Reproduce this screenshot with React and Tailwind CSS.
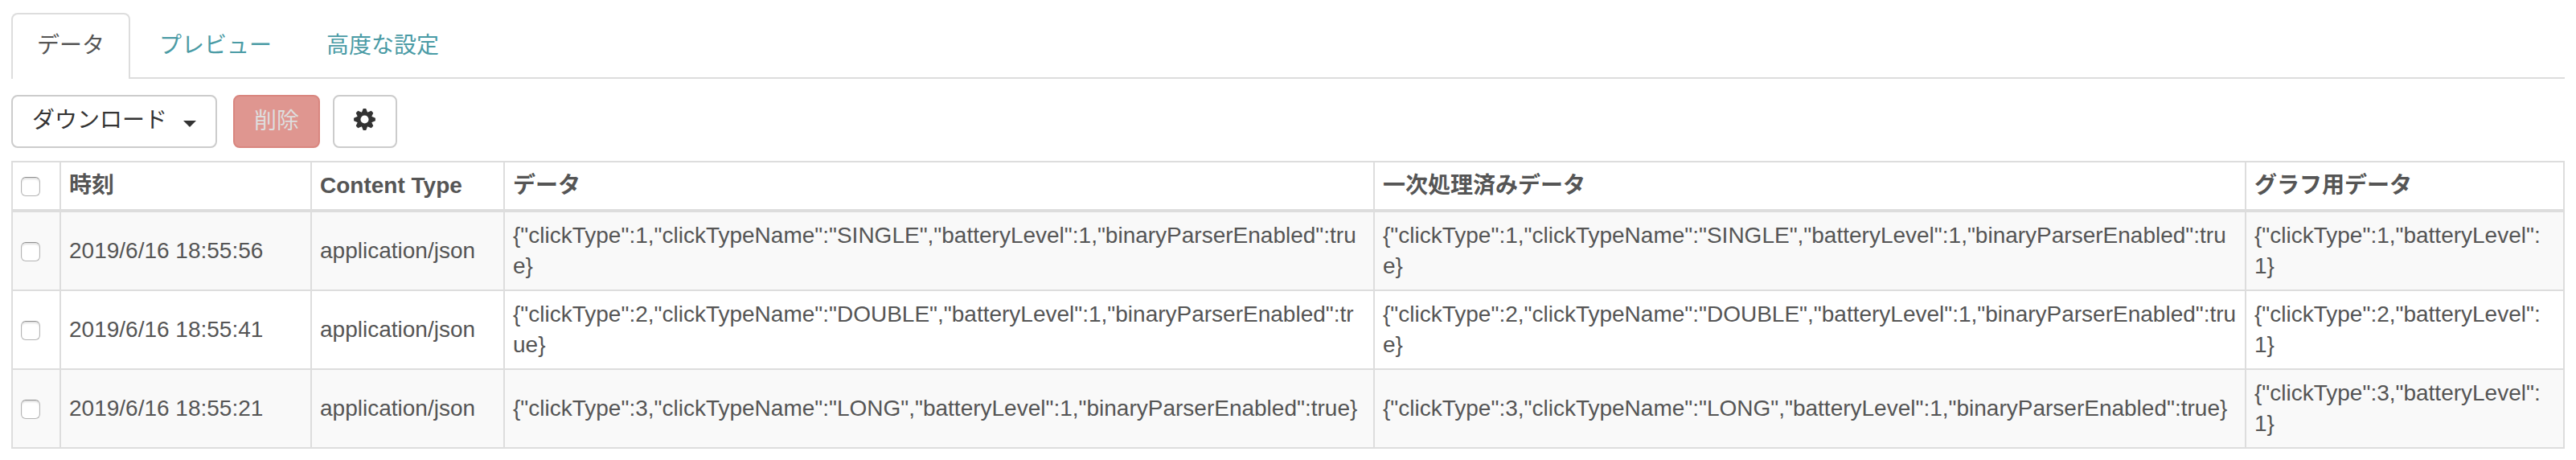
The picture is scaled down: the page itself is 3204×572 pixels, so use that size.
const rows = [
  { time: "2019/6/16 18:55:56", click: 1, name: "SINGLE" },
  { time: "2019/6/16 18:55:41", click: 2, name: "DOUBLE" },
  { time: "2019/6/16 18:55:21", click: 3, name: "LONG" },
];

const payload = (r) =>
  `{"clickType":${r.click},"clickTypeName":"${r.name}","batteryLevel":1,"binaryParserEnabled":true}`;

const graph = (r) => `{"clickType":${r.click},"batteryLevel":1}`;

function Check() {
  return (
    <span className="mt-px block h-6 w-6 rounded-[6px] border border-[#b4b4b4] border-t-[#8f8f8f] bg-white shadow-[inset_0_2px_2px_rgba(0,0,0,0.12)]" />
  );
}

function Gear() {
  return (
    <svg viewBox="-600 -600 1200 1200" className="mr-px mb-[6px] block h-[27px] w-[27px]" fill="#333" stroke="#333" strokeLinejoin="round">
      <circle r="325" fill="none" strokeWidth="200" />
      {[0, 45, 90, 135, 180, 225, 270, 315].map((a) => (
        <path key={a} d="M-130-370L-60-560H60L130-370z" strokeWidth="70" transform={`rotate(${a})`} />
      ))}
    </svg>
  );
}

const th = "border-2 border-b-4 border-[#ddd] px-[10px] py-[9px] text-left align-middle font-bold";
const td = "border-2 border-[#ddd] px-[10px] py-[10px] align-middle break-all";

export default function App() {
  return (
    <div
      lang="ja"
      className="h-[572px] w-[3204px] overflow-hidden bg-white px-[14px] pt-4 font-['Liberation_Sans','Noto_Sans_CJK_JP',sans-serif] text-[28px] leading-10 text-[#555]"
    >
      <nav className="flex h-[82px] border-b-2 border-[#ddd]">
        <span className="h-[82px] w-[148px] rounded-t-lg border-2 border-b-0 border-[#ddd] bg-white pt-[19px] text-center">データ</span>
        <span className="ml-1 pt-[21px] pl-8 whitespace-nowrap text-[#4a9ba5]">プレビュー</span>
        <span className="ml-[68px] pt-[21px] whitespace-nowrap text-[#4a9ba5]">高度な設定</span>
      </nav>
      <div className="mt-5 flex h-[66px] gap-5">
        <button className="flex w-[256px] items-center rounded-lg border-2 border-[#ccc] pb-[2px] pl-6 text-[#333]">
          <span>ダウンロード</span>
          <span className="mt-2 ml-5 h-0 w-0 border-x-8 border-t-8 border-x-transparent border-t-[#333]" />
        </button>
        <button className="w-[108px] rounded-lg border-2 border-[#d9867f] bg-[#df9690] text-[#dedede]">削除</button>
        <button className="-ml-1 flex w-[80px] items-center justify-center rounded-lg border-2 border-[#ccc]">
          <Gear />
        </button>
      </div>
      <table className="mt-[16px] w-[3176px] table-fixed border-collapse">
        <colgroup>
          <col className="w-[60px]" />
          <col className="w-[312px]" />
          <col className="w-[240px]" />
          <col className="w-[1082px]" />
          <col className="w-[1084px]" />
          <col className="w-[396px]" />
        </colgroup>
        <thead>
          <tr>
            <th className={th}><Check /></th>
            <th className={th}>時刻</th>
            <th className={th}>Content Type</th>
            <th className={th}>データ</th>
            <th className={th}>一次処理済みデータ</th>
            <th className={th}>グラフ用データ</th>
          </tr>
        </thead>
        <tbody className="leading-[38px]">
          {rows.map((r) => (
            <tr key={r.time} className="h-[98px] odd:bg-[#f9f9f9]">
              <td className={td}><Check /></td>
              <td className={td}>{r.time}</td>
              <td className={td}>application/json</td>
              <td className={td}>{payload(r)}</td>
              <td className={td}>{payload(r)}</td>
              <td className={td}>{graph(r)}</td>
            </tr>
          ))}
        </tbody>
      </table>
    </div>
  );
}
